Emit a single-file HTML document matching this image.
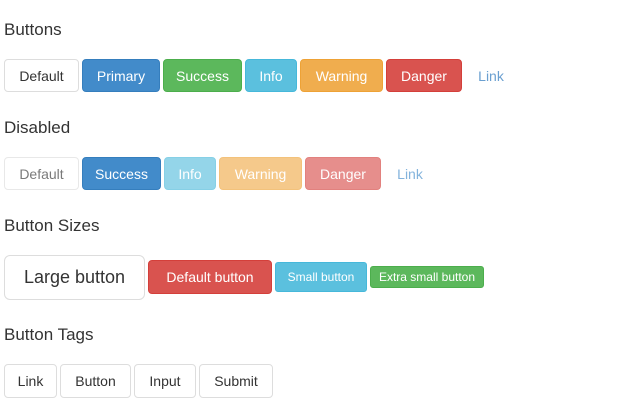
<!DOCTYPE html>
<html><head><style>
body{margin:0;width:618px;height:409px;background:#fff;font-family:"Liberation Sans",sans-serif;position:relative;overflow:hidden}
h3{position:absolute;left:4px;margin:0;font-weight:normal;font-size:17px;color:#333;line-height:20px}
.b{position:absolute;box-sizing:border-box;border:1px solid;border-radius:4px;display:flex;align-items:center;justify-content:center;font-size:14px;color:#fff;white-space:nowrap}
.d{background:#fff;border-color:#ddd;color:#333}
.p{background:#428bca;border-color:#357ebd}
.s{background:#5cb85c;border-color:#4cae4c}
.i{background:#5bc0de;border-color:#46b8da}
.w{background:#f0ad4e;border-color:#eea236}
.r{background:#d9534f;border-color:#d43f3a}
.l{border-color:transparent;color:#428bca}
.dis{opacity:.65}
</style></head><body>
<h3 style="top:20px">Buttons</h3>
<div class="b d" style="left:4px;top:59px;width:75px;height:33px">Default</div>
<div class="b p" style="left:82px;top:59px;width:78px;height:33px">Primary</div>
<div class="b s" style="left:163px;top:59px;width:79px;height:33px">Success</div>
<div class="b i" style="left:245px;top:59px;width:52px;height:33px">Info</div>
<div class="b w" style="left:300px;top:59px;width:83px;height:33px">Warning</div>
<div class="b r" style="left:386px;top:59px;width:76px;height:33px">Danger</div>
<div class="b l" style="left:465px;top:59px;width:52px;height:33px;color:#6a9fd0">Link</div>

<h3 style="top:118px">Disabled</h3>
<div class="b d dis" style="left:4px;top:157px;width:75px;height:33px">Default</div>
<div class="b p" style="left:82px;top:157px;width:79px;height:33px">Success</div>
<div class="b i dis" style="left:164px;top:157px;width:52px;height:33px">Info</div>
<div class="b w dis" style="left:219px;top:157px;width:83px;height:33px">Warning</div>
<div class="b r dis" style="left:305px;top:157px;width:76px;height:33px">Danger</div>
<div class="b l dis" style="left:384px;top:157px;width:52px;height:33px">Link</div>

<h3 style="top:216px">Button Sizes</h3>
<div class="b d" style="left:4px;top:255px;width:141px;height:45px;font-size:18px;border-radius:6px">Large button</div>
<div class="b r" style="left:148px;top:260px;width:124px;height:34px">Default button</div>
<div class="b i" style="left:275px;top:262px;width:92px;height:30px;font-size:12px;border-radius:3px">Small button</div>
<div class="b s" style="left:370px;top:266px;width:114px;height:22px;font-size:12px;border-radius:3px">Extra small button</div>

<h3 style="top:325px">Button Tags</h3>
<div class="b d" style="left:4px;top:364px;width:53px;height:34px">Link</div>
<div class="b d" style="left:60px;top:364px;width:71px;height:34px">Button</div>
<div class="b d" style="left:134px;top:364px;width:62px;height:34px">Input</div>
<div class="b d" style="left:199px;top:364px;width:74px;height:34px">Submit</div>
</body></html>
